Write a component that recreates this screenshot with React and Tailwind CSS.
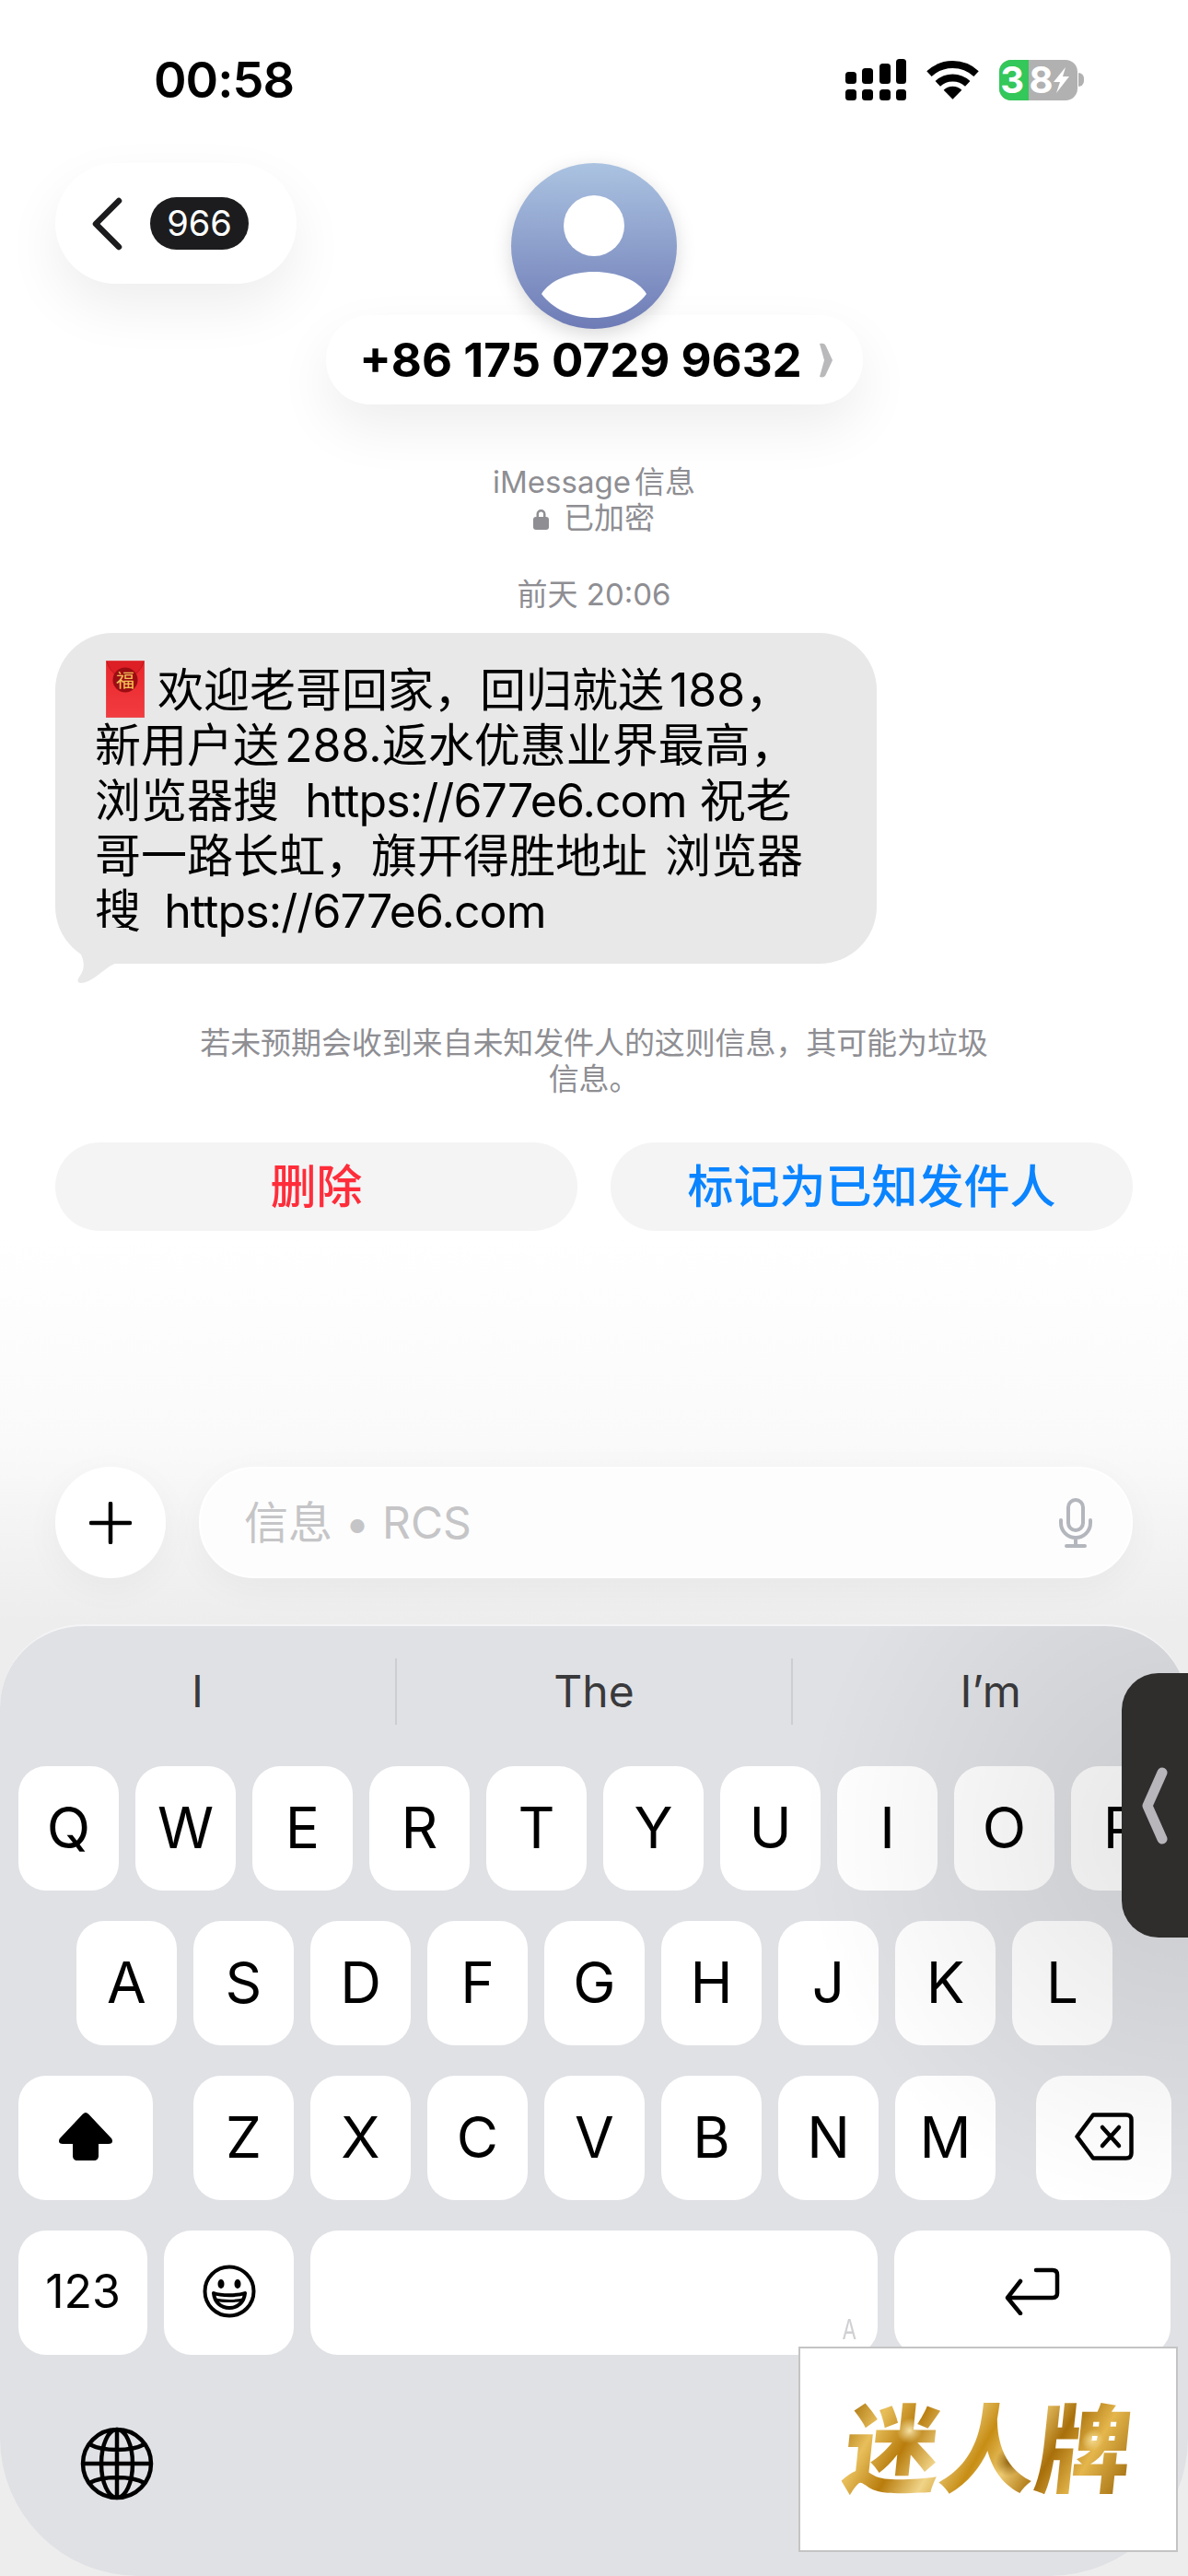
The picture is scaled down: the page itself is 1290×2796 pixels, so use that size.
import React from 'react';

const font = 'font-["Inter","Noto_Sans_CJK_SC",sans-serif]';

const rows = [
  ['Q', 'W', 'E', 'R', 'T', 'Y', 'U', 'I', 'O', 'P'],
  ['A', 'S', 'D', 'F', 'G', 'H', 'J', 'K', 'L'],
  ['Z', 'X', 'C', 'V', 'B', 'N', 'M'],
];

const Key = ({ children, className = 'w-[109px]' }) => (
  <div className={`relative flex h-[135px] shrink-0 items-center justify-center rounded-[30px] bg-white pb-[3px] text-[62px] text-black ${className}`}>
    {children}
  </div>
);

// latin runs in the bubble sit tighter than Inter's default
const Latin = ({ children }) => <span className="tracking-[-0.9px]">{children}</span>;

const StatusIcons = () => (
  <div className="flex items-center gap-[22px]">
    <svg width="66" height="45" viewBox="0 0 66 45" fill="#000">
      <rect x="0" y="14" width="12" height="13" rx="3.5" />
      <rect x="18" y="10" width="12" height="17" rx="3.5" />
      <rect x="37" y="5" width="12" height="22" rx="3.5" />
      <rect x="55" y="0" width="11" height="27" rx="3.5" />
      <rect x="0" y="33" width="12" height="12" rx="3.5" />
      <rect x="18" y="33" width="12" height="12" rx="3.5" />
      <rect x="37" y="33" width="12" height="12" rx="3.5" />
      <rect x="55" y="33" width="11" height="12" rx="3.5" />
    </svg>
    <svg width="57" height="43" viewBox="0 0 58 43" fill="none" stroke="#000" strokeWidth="8">
      <path d="M3 15 A38 38 0 0 1 55 15" />
      <path d="M12.5 26 A24 24 0 0 1 45.5 26" />
      <path d="M29 43 L19 33 A14 14 0 0 1 39 33 Z" fill="#000" stroke="none" />
    </svg>
    <div className="flex items-center gap-[1px]">
      <div className="flex h-[44px] w-[85px] rounded-[13px] bg-[#b1b1b1]">
        <div className="flex w-[32px] items-center justify-end rounded-l-[13px] bg-[#34c759] pr-[5px] text-[40px] leading-[44px] font-bold text-white">3</div>
        <div className="flex w-[27px] items-center justify-center text-[40px] leading-[44px] font-bold text-white">8</div>
        <svg className="mt-[8px]" width="18" height="28" viewBox="0 0 18 28" fill="#fff">
          <path d="M13 0 L0 16 H7 L3 28 L17 10 H10 Z" />
        </svg>
      </div>
      <div className="h-[15px] w-[6px] rounded-r-full bg-[#b1b1b1]" />
    </div>
  </div>
);

const Avatar = () => (
  <svg className="relative z-10 drop-shadow-[0_6px_10px_rgba(0,0,0,0.15)]" width="180" height="180" viewBox="0 0 180 180">
    <defs>
      <linearGradient id="avatarFill" x1="0" y1="0" x2="0" y2="1">
        <stop offset="0" stopColor="#abc3e1" />
        <stop offset="1" stopColor="#6e7bb6" />
      </linearGradient>
    </defs>
    <circle cx="90" cy="90" r="90" fill="url(#avatarFill)" />
    <circle cx="90" cy="68" r="33" fill="#fff" />
    <path d="M33 142 C42 127 65 118 90 118 C115 118 138 127 147 142 C135 158 115 168 90 168 C65 168 45 158 33 142 Z" fill="#fff" />
  </svg>
);

const RedPacket = () => (
  <svg className="-my-[12px] mr-[14px] ml-[12px] inline-block align-[0px]" width="42" height="62" viewBox="0 0 42 62">
    <defs>
      <linearGradient id="packetFill" x1="0" y1="0" x2="0" y2="1">
        <stop offset="0" stopColor="#e8262b" />
        <stop offset="1" stopColor="#f23c40" />
      </linearGradient>
    </defs>
    <rect width="42" height="62" fill="url(#packetFill)" stroke="#d9676a" strokeWidth="0.8" />
    <path d="M1 1 C4 12 12 18 21 18 C30 18 38 12 41 1" fill="#dd1f26" stroke="#b3141c" strokeWidth="0.8" />
    <circle cx="21" cy="21" r="13.5" fill="#9b0d12" />
    <text x="21" y="29" textAnchor="middle" fontSize="20" fill="#f4c35a" fontFamily="Noto Sans CJK SC">福</text>
  </svg>
);

const Globe = () => (
  <svg width="80" height="82" viewBox="0 0 80 82" fill="none" stroke="#000" strokeWidth="4.5">
    <circle cx="40" cy="41" r="37" />
    <ellipse cx="40" cy="41" rx="17" ry="37" />
    <path d="M40 4 V78 M3 41 H77 M10 20 C25 28 55 28 70 20 M10 62 C25 54 55 54 70 62" />
  </svg>
);

export default function App() {
  return (
    <div lang="zh-CN" className={`relative flex h-[2796px] w-[1290px] flex-col overflow-hidden bg-[linear-gradient(to_bottom,#ffffff_0%,#ffffff_48%,#fafafa_56%,#ededed_63%)] ${font}`}>
      {/* status bar */}
      <div className="flex h-[177px] shrink-0 items-start justify-between pt-[64px] pr-[113px] pl-[167px]">
        <span className="text-[54px] leading-[46px] font-semibold tracking-[-1px] text-black">00:58</span>
        <StatusIcons />
      </div>

      {/* header */}
      <div className="grid shrink-0 grid-cols-[1fr_auto_1fr] px-[60px]">
        <div className="flex h-[131px] w-[262px] items-center gap-[30px] rounded-[66px] bg-white pl-[40px] shadow-[0_25px_60px_rgba(0,0,0,0.07)]">
          <svg width="33" height="58" viewBox="0 0 33 58" fill="none" stroke="#1c1c1e" strokeWidth="6.5" strokeLinecap="round" strokeLinejoin="round">
            <path d="M29 4 L4 29 L29 54" />
          </svg>
          <div className="flex h-[57px] w-[107px] items-center justify-center rounded-full bg-[#1c1c1e] text-[38px] text-white">966</div>
        </div>
        <div className="flex flex-col items-center">
          <Avatar />
          <div className="-mt-[15px] flex h-[97px] w-[583px] items-center justify-center gap-[18px] rounded-[48px] bg-white pl-[5px] shadow-[0_25px_60px_rgba(0,0,0,0.07)]">
            <span className="text-[51px] leading-none font-bold text-black">+86 175 0729 9632</span>
            <svg width="16" height="38" viewBox="0 0 16 38" fill="#b9b9bb">
              <path d="M1 1 C5 0 7 1 8 4 L15 19 L8 34 C7 37 5 38 1 37 L6 19 Z" />
            </svg>
          </div>
        </div>
        <div />
      </div>

      {/* thread */}
      <div className="mt-[65px] flex shrink-0 flex-col items-center text-[33px] leading-[39px] text-[#8e8e93]">
        <span>iMessage<span className="ml-[4px]">信息</span></span>
        <span className="flex items-center gap-[16px]">
          <svg width="17" height="24" viewBox="0 0 17 24" fill="#8e8e93">
            <path d="M3.5 10 V7 a5 5 0 0 1 10 0 V10 H11 V7 a2.5 2.5 0 0 0 -5 0 V10 Z" />
            <rect x="0" y="10" width="17" height="14" rx="3" />
          </svg>
          已加密
        </span>
      </div>
      <div className="mt-[44px] shrink-0 text-center text-[33px] leading-[39px] text-[#8e8e93]">前天 20:06</div>

      <div className="relative mt-[22px] ml-[60px] h-[359px] w-[892px] shrink-0 rounded-[62px] bg-[#e8e8e8] pt-[32px] pl-[43px] text-[50px] leading-[60px] whitespace-nowrap text-black">
        <RedPacket />欢迎老哥回家，回归就送<span className="ml-[6px]">188</span>，<br />
        新用户送<span className="ml-[6px]">288.</span>返水优惠业界最高，<br />
        浏览器搜&nbsp;&nbsp;<Latin>https://677e6.com</Latin> 祝老<br />
        哥一路长虹，旗开得胜地址<span className="ml-[5px]"> 浏览器</span><br />
        搜&nbsp;&nbsp;<span className="-ml-[3px]"><Latin>https://677e6.com</Latin></span>
        <svg className="absolute top-[320px] left-[10px]" width="70" height="60" viewBox="0 0 70 60" fill="#e8e8e8">
          <path d="M0 0 H70 V39 H55 C45 42 30 60 18 60 C13 60 14 56 17 52 C24 42 22 28 5 12 Z" />
        </svg>
      </div>

      <div className="mt-[67px] shrink-0 px-[200px] text-center text-[33px] leading-[39px] tracking-[-0.1px] text-[#8e8e93]">
        若未预期会收到来自未知发件人的这则信息，其可能为垃圾<br />信息。
      </div>

      <div className="mt-[49px] flex shrink-0 gap-[36px] px-[60px] text-[50px] font-medium">
        <div className="flex h-[96px] w-[567px] items-center justify-center rounded-[48px] bg-[#f4f4f5] text-[#ff2d3a]">删除</div>
        <div className="flex h-[96px] w-[567px] items-center justify-center rounded-[48px] bg-[#f4f4f5] text-[#0a84ff]">标记为已知发件人</div>
      </div>

      <div className="flex-1" />

      {/* input row */}
      <div className="flex shrink-0 gap-[36px] px-[60px]">
        <div className="flex h-[121px] w-[120px] items-center justify-center rounded-full bg-white shadow-[0_10px_40px_rgba(0,0,0,0.04)]">
          <svg width="46" height="46" viewBox="0 0 46 46" stroke="#000" strokeWidth="4.5" strokeLinecap="round">
            <path d="M23 2 V44 M2 23 H44" />
          </svg>
        </div>
        <div className="flex h-[121px] flex-1 items-center justify-between rounded-[60px] border-2 border-white bg-[#fdfdfd] pr-[42px] pl-[47px] shadow-[0_10px_40px_rgba(0,0,0,0.04)]">
          <span className="text-[48px] text-[#c5c5c7]">信息 • RCS</span>
          <svg width="36" height="54" viewBox="0 0 36 54" fill="none" stroke="#b3b6bc" strokeWidth="4" strokeLinecap="round">
            <rect x="10" y="2" width="16" height="33" rx="8" />
            <path d="M2 24 V27 a16 16 0 0 0 32 0 V24 M18 43 V51 M8 52 H28" />
          </svg>
        </div>
      </div>

      {/* keyboard */}
      <div className="relative mt-[50px] h-[1033px] shrink-0 rounded-t-[90px] rounded-b-[150px] border-t-2 border-[#f4f4f6] bg-[#e0e1e5] pt-[35px]">
        <div className="flex h-[72px] text-[48px] leading-[72px] text-[#3a3a3c]">
          <div className="flex-1 border-r-2 border-[#cdced2] text-center">I</div>
          <div className="flex-1 border-r-2 border-[#cdced2] text-center">The</div>
          <div className="flex-1 text-center">I’m</div>
        </div>

        <div className="mt-[45px] flex flex-col gap-[33px]">
          <div className="flex gap-[18px] pl-[20px]">
            {rows[0].map(k => <Key key={k}>{k}</Key>)}
          </div>
          <div className="flex gap-[18px] pl-[83px]">
            {rows[1].map(k => <Key key={k}>{k}</Key>)}
          </div>
          <div className="flex pl-[20px]">
            <Key className="mr-[44px] w-[146px]">
              <svg width="60" height="52" viewBox="0 0 60 52" fill="#000">
                <path d="M30 0 C31 0 32 0.5 33 1.5 L58 28 C60 31 59 34 55 34 H44 V47 C44 50 42 52 39 52 H21 C18 52 16 50 16 47 V34 H5 C1 34 0 31 2 28 L27 1.5 C28 0.5 29 0 30 0 Z" />
              </svg>
            </Key>
            <div className="flex gap-[18px]">
              {rows[2].map(k => <Key key={k}>{k}</Key>)}
            </div>
            <Key className="ml-[44px] w-[147px]">
              <svg width="64" height="52" viewBox="0 0 64 52" fill="none" stroke="#000" strokeWidth="4.5" strokeLinejoin="round" strokeLinecap="round">
                <path d="M20 2.5 H56 C59.5 2.5 61.5 4.5 61.5 8 V44 C61.5 47.5 59.5 49.5 56 49.5 H20 L2.5 26 Z" />
                <path d="M30 16 L48 36 M48 16 L30 36" />
              </svg>
            </Key>
          </div>
          <div className="flex gap-[18px] pl-[20px]">
            <Key className="w-[140px] !text-[50px]">123</Key>
            <Key className="w-[141px]">
              <svg width="58" height="58" viewBox="0 0 58 58" fill="none" stroke="#000" strokeWidth="4">
                <circle cx="29" cy="29" r="26.5" />
                <ellipse cx="20" cy="21" rx="3.5" ry="5" fill="#000" stroke="none" />
                <ellipse cx="38" cy="21" rx="3.5" ry="5" fill="#000" stroke="none" />
                <path d="M12 31 C20 34 38 34 46 31 C45 41 38 47 29 47 C20 47 13 41 12 31 Z" strokeLinejoin="round" />
                <path d="M14 38 C22 40 36 40 44 38" strokeWidth="3" />
              </svg>
            </Key>
            <Key className="w-[616px]">
              <span className="absolute right-[20px] bottom-[13px] scale-x-75 text-[30px] leading-none text-[#d0d0d3]">A</span>
            </Key>
            <Key className="w-[300px]">
              <svg width="60" height="52" viewBox="0 0 60 52" fill="none" stroke="#000" strokeWidth="4.5" strokeLinecap="round" strokeLinejoin="round">
                <path d="M34 3 H52 C55.5 3 57 4.5 57 8 V28 C57 31.5 55.5 33 52 33 H4" />
                <path d="M17 15 L3 33 L17 50" />
              </svg>
            </Key>
          </div>
        </div>

        <div className="mt-[77px] pl-[87px]">
          <Globe />
        </div>

        {/* shadow thrown by the side handle */}
        <div className="pointer-events-none absolute inset-0 rounded-t-[90px] rounded-b-[150px] bg-[radial-gradient(circle_420px_at_100%_22%,rgba(0,0,0,0.1),rgba(0,0,0,0))]" />
      </div>

      {/* side handle */}
      <div className="absolute top-[1816px] right-0 flex h-[287px] w-[72px] items-center rounded-l-[40px] bg-[#2f2e2d] pl-[22px]">
        <svg width="28" height="84" viewBox="0 0 28 84" fill="none" stroke="#b8b5bb" strokeWidth="11" strokeLinecap="round" strokeLinejoin="round">
          <path d="M22 6 L6 42 L22 78" />
        </svg>
      </div>

      {/* watermark */}
      <div className="absolute top-[2547px] left-[867px] flex h-[223px] w-[412px] items-center justify-center border-2 border-[#c4c4c4] bg-white">
        <span className="-skew-x-6 bg-[radial-gradient(circle_14px_at_22%_30%,#f6e3a8,transparent),radial-gradient(circle_16px_at_58%_62%,#8a5a06,transparent),radial-gradient(circle_12px_at_86%_40%,#f3d98e,transparent),linear-gradient(115deg,#a66f08_0%,#e8bf5c_12%,#b87c0c_24%,#f0d488_36%,#c78d14_48%,#eecb72_58%,#a86f0a_70%,#e4b64c_82%,#9a6508_100%)] bg-clip-text text-[104px] leading-none font-black text-transparent">迷人牌</span>
      </div>
    </div>
  );
}
